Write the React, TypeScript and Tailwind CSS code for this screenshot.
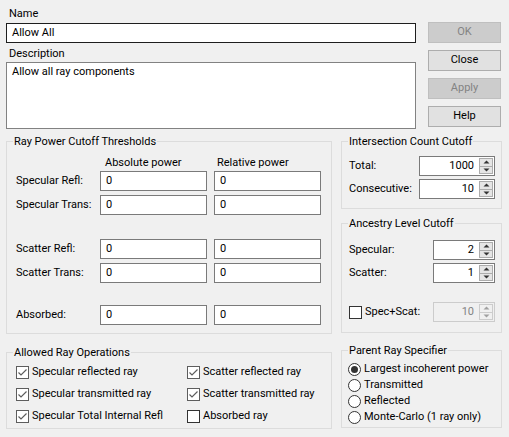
import React from 'react';

const FONT = { fontFamily: 'Roboto, "Segoe UI", sans-serif' };

function Button({ label, disabled }: { label: string; disabled?: boolean }) {
  return (
    <div
      className={
        disabled
          ? 'h-[21px] flex items-center justify-center border border-[#bfbfbf] bg-[#cccccc] text-[#838383]'
          : 'h-[21px] flex items-center justify-center border border-[#adadad] bg-[#e1e1e1] text-black'
      }
    >
      {label}
    </div>
  );
}

function TextBox({ value }: { value: string }) {
  return (
    <div className="h-[20px] border border-[#7a7a7a] bg-white pl-[5px] leading-[18px]">{value}</div>
  );
}

function Arrow({ up, disabled }: { up?: boolean; disabled?: boolean }) {
  return (
    <svg width="7" height="4" viewBox="0 0 7 4">
      <path d={up ? 'M0.5 3.5 L3.5 0.5 L6.5 3.5 Z' : 'M0.5 0.5 L3.5 3.5 L6.5 0.5 Z'} fill={disabled ? '#a0a0a0' : '#333333'} />
    </svg>
  );
}

function Spinner({ value, wide, disabled }: { value: string; wide?: boolean; disabled?: boolean }) {
  return (
    <div
      className={
        (wide ? 'w-[76px] ' : 'w-[62px] ') +
        (disabled
          ? 'flex h-[20px] border border-[#cccccc] bg-[#f0f0f0] text-[#838383]'
          : 'flex h-[20px] border border-[#7a7a7a] bg-white')
      }
    >
      <div className="flex-1 pr-[5px] text-right leading-[18px]">{value}</div>
      <div
        className={
          disabled
            ? 'my-[1px] mr-[1px] flex w-[14px] flex-col border border-[#cccccc] bg-[#f0f0f0]'
            : 'my-[1px] mr-[1px] flex w-[14px] flex-col border border-[#acacac] bg-[#e5e5e5]'
        }
      >
        <div
          className={
            disabled
              ? 'flex flex-1 items-center justify-center border-b border-[#cccccc]'
              : 'flex flex-1 items-center justify-center border-b border-[#acacac]'
          }
        >
          <Arrow up disabled={disabled} />
        </div>
        <div className="flex flex-1 items-center justify-center">
          <Arrow disabled={disabled} />
        </div>
      </div>
    </div>
  );
}

function Check({ label, checked }: { label: string; checked?: boolean }) {
  return (
    <div className="flex h-[22px] items-center gap-[3px]">
      <div
        className={
          checked
            ? 'flex h-[13px] w-[13px] shrink-0 items-center justify-center border border-[#5d5d5d] bg-white'
            : 'flex h-[13px] w-[13px] shrink-0 items-center justify-center border border-[#333333] bg-white'
        }
      >
        {checked && (
          <svg width="11" height="11" viewBox="0 0 11 11">
            <path d="M1.5 5.5 L4 8 L9.5 2.5" stroke="#5d5d5d" strokeWidth="1.2" fill="none" />
          </svg>
        )}
      </div>
      <span>{label}</span>
    </div>
  );
}

function Radio({ label, checked }: { label: string; checked?: boolean }) {
  return (
    <div className="flex h-[16px] items-center gap-[3px]">
      <div className="flex h-[13px] w-[13px] shrink-0 items-center justify-center rounded-full border border-[#333333] bg-white">
        {checked && <div className="h-[7px] w-[7px] rounded-full bg-[#333333]" />}
      </div>
      <span>{label}</span>
    </div>
  );
}

// Windows style group box: fieldset + legend, content padding on the inner div
function Group({
  title,
  className,
  inner,
  children,
}: {
  title: string;
  className: string;
  inner: string;
  children: React.ReactNode;
}) {
  return (
    <fieldset className={'border border-[#dcdcdc] ' + className}>
      <legend className="ml-[6px] h-[15px] px-[1px] leading-[15px]">{title}</legend>
      <div className={inner}>{children}</div>
    </fieldset>
  );
}

export default function App() {
  const powerRows = [
    { label: 'Specular Refl:', mt: 'mt-[1px]' },
    { label: 'Specular Trans:', mt: 'mt-[4px]' },
    { label: 'Scatter Refl:', mt: 'mt-[24px]' },
    { label: 'Scatter Trans:', mt: 'mt-[4px]' },
    { label: 'Absorbed:', mt: 'mt-[22px]' },
  ];

  return (
    <div className="h-[437px] w-[509px] overflow-hidden whitespace-nowrap bg-[#f0f0f0] text-[11px] text-black" style={FONT}>
      {/* Name / description + buttons */}
      <div className="flex pl-[6px] pt-[6px]">
        <div className="w-[410px]">
          <div className="h-[15px] pl-[3px] leading-[15px]">Name</div>
          <div className="mt-[2px] h-[20px] border border-[#1e1e1e] bg-white pl-[5px] leading-[18px]">Allow All</div>
          <div className="mt-[3px] h-[15px] pl-[3px] leading-[15px]">Description</div>
          <div className="mt-[1px] h-[67px] border border-[#828282] bg-white pl-[5px] pt-[1px] leading-[16px]">
            Allow all ray components
          </div>
        </div>
        <div className="ml-[12px] mt-[16px] flex w-[73px] flex-col gap-[7px]">
          <Button label="OK" disabled />
          <Button label="Close" />
          <Button label="Apply" disabled />
          <Button label="Help" />
        </div>
      </div>

      <div className="mt-[5px] flex pl-[6px]">
        {/* left column */}
        <div className="w-[326px]">
          <Group title="Ray Power Cutoff Thresholds" className="h-[200px]" inner="pl-[9px]">
            <div className="mt-[6px] grid grid-cols-[77px_107px_107px] gap-x-[7px]">
              <div />
              <div className="h-[15px] pl-[5px] leading-[15px]">Absolute power</div>
              <div className="h-[15px] pl-[3px] leading-[15px]">Relative power</div>
            </div>
            {powerRows.map((r) => (
              <div key={r.label} className={'grid grid-cols-[77px_107px_107px] gap-x-[7px] ' + r.mt}>
                <div className="leading-[20px]">{r.label}</div>
                <TextBox value="0" />
                <TextBox value="0" />
              </div>
            ))}
          </Group>

          <Group title="Allowed Ray Operations" className="mt-[11px] h-[84px]" inner="mt-[1px] pl-[9px]">
            <div className="grid grid-cols-[171px_1fr]">
              <Check label="Specular reflected ray" checked />
              <Check label="Scatter reflected ray" checked />
              <Check label="Specular transmitted ray" checked />
              <Check label="Scatter transmitted ray" checked />
              <Check label="Specular Total Internal Refl" checked />
              <Check label="Absorbed ray" />
            </div>
          </Group>
        </div>

        {/* right column */}
        <div className="ml-[9px] w-[161px]">
          <Group title="Intersection Count Cutoff" className="h-[75px]" inner="pl-[7px]">
            <div className="mt-[7px] flex items-center">
              <span className="w-[70px]">Total:</span>
              <Spinner value="1000" wide />
            </div>
            <div className="mt-[3px] flex items-center">
              <span className="w-[70px]">Consecutive:</span>
              <Spinner value="10" wide />
            </div>
          </Group>

          <Group title="Ancestry Level Cutoff" className="mt-[7px] h-[117px]" inner="pl-[7px]">
            <div className="mt-[9px] flex items-center">
              <span className="w-[84px]">Specular:</span>
              <Spinner value="2" />
            </div>
            <div className="mt-[3px] flex items-center">
              <span className="w-[84px]">Scatter:</span>
              <Spinner value="1" />
            </div>
            <div className="mt-[18px] flex items-center">
              <div className="w-[84px]">
                <Check label="Spec+Scat:" />
              </div>
              <Spinner value="10" disabled />
            </div>
          </Group>

          <Group title="Parent Ray Specifier" className="mt-[10px] h-[85px]" inner="mt-[3px] pl-[6px]">
            <Radio label="Largest incoherent power" checked />
            <Radio label="Transmitted" />
            <Radio label="Reflected" />
            <Radio label="Monte-Carlo (1 ray only)" />
          </Group>
        </div>
      </div>
    </div>
  );
}
